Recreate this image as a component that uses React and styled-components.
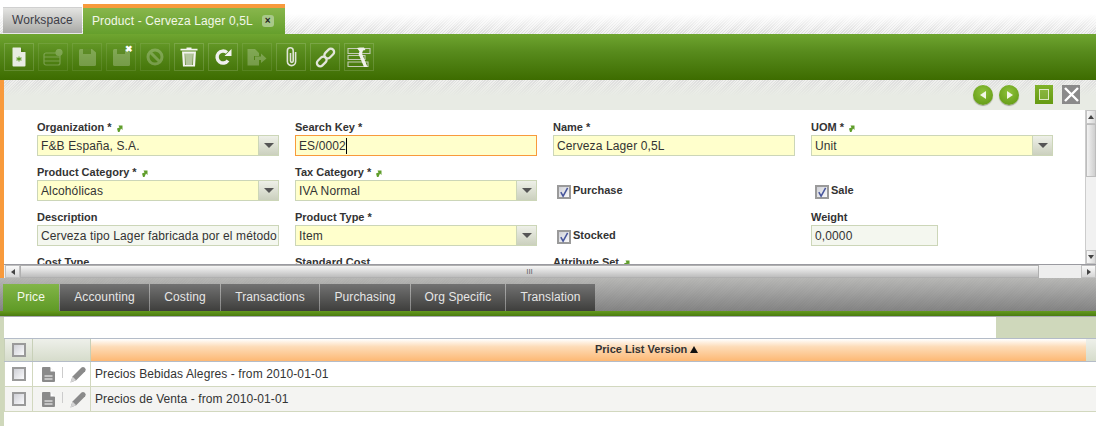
import React from "react";
import styled, { createGlobalStyle, css } from "styled-components";

const GlobalStyle = createGlobalStyle`
  html, body { margin: 0; padding: 0; background: #fff; }
  body { font-family: "Liberation Sans", Arial, sans-serif; color: #333; }
`;

const hatch = (c1, c2) => `repeating-linear-gradient(135deg, ${c1} 0, ${c1} 1px, ${c2} 1px, ${c2} 2px)`;

const Page = styled.div`
  width: 1096px;
  height: 426px;
  overflow: hidden;
  display: flex;
  flex-direction: column;
`;

const TabStrip = styled.div`
  height: 34px;
  display: flex;
  align-items: flex-end;
  padding-left: 3px;
  background: linear-gradient(to bottom, #fff 0, #fff 14px, rgba(255,255,255,0) 32px), ${hatch("#e0e0e0", "#f3f3f3")};
`;

const WorkspaceTab = styled.div`
  width: 79px;
  height: 27px;
  margin-right: 1px;
  box-sizing: border-box;
  padding-left: 9px;
  line-height: 25px;
  font-size: 12px;
  letter-spacing: 0.12px;
  color: #3c3c46;
  background: linear-gradient(to bottom, #e4e4e2, #a9a9a6);
  border-top: 1px solid #d0d0d0;
  border-bottom: 1px solid #e8e8e8;
`;

const ActiveTab = styled.div`
  width: 202px;
  height: 30px;
  box-sizing: border-box;
  border-top: 4px solid #f89a3c;
  padding-left: 9px;
  display: flex;
  align-items: center;
  font-size: 12px;
  letter-spacing: 0.12px;
  color: #f2f7e8;
  background: linear-gradient(to bottom, #88b64c, #659f2c);
`;

const TabClose = styled.span`
  width: 12px;
  height: 12px;
  margin-left: 9px;
  border-radius: 3px;
  background: #a9c98a;
  color: #222;
  font-size: 10px;
  font-weight: bold;
  line-height: 12px;
  text-align: center;
`;

const Toolbar = styled.div`
  height: 46px;
  box-sizing: border-box;
  padding: 9px 4px 0;
  display: flex;
  gap: 4px;
  background: linear-gradient(to bottom, #6fa530 0, #578a1c 40%, #3d6c00 100%);
`;

const ToolButton = styled.div`
  width: 30px;
  height: 28px;
  box-sizing: border-box;
  border: 1px solid ${p => (p.$off ? "rgba(255,255,255,0.09)" : "rgba(255,255,255,0.15)")};
  display: flex;
  align-items: center;
  justify-content: center;
  position: relative;
  svg { display: block; opacity: ${p => (p.$off ? 0.24 : 1)}; }
`;

const ToolBadge = styled.span`
  position: absolute;
  right: 2px;
  top: 1px;
  color: #fff;
  font-size: 9px;
  font-weight: bold;
  line-height: 8px;
`;

const Main = styled.div`
  border-left: 4px solid #f89a3c;
  height: 198px;
  display: flex;
  flex-direction: column;
`;

const ActionBar = styled.div`
  height: 30px;
  flex: none;
  box-sizing: border-box;
  padding: 5px 16px 0 0;
  display: flex;
  justify-content: flex-end;
  align-items: flex-start;
  background: linear-gradient(to bottom, rgba(232,235,228,0) 0, #e8ebe4 16px), ${hatch("#dedede", "#f0f0ee")};
`;

const RoundBtn = styled.span`
  width: 20px;
  height: 20px;
  margin-right: ${p => p.$mr || 6}px;
  border-radius: 50%;
  background: radial-gradient(circle at 50% 35%, #8ec23a, #5c9410);
  box-shadow: 0 1px 1px #9aa08c;
  display: flex;
  align-items: center;
  justify-content: center;
`;

const MaxBtn = styled.span`
  width: 18px;
  height: 19px;
  margin-right: 9px;
  box-sizing: border-box;
  background: linear-gradient(to bottom, #80b22a, #659a12);
  padding: 4px;
  &::after {
    content: "";
    display: block;
    height: 100%;
    border: 1px solid #dfe9c8;
    background: rgba(255,255,255,0.12);
    box-sizing: border-box;
  }
`;

const CloseBtn = styled.span`
  width: 18px;
  height: 19px;
  background: #8a8a8a;
  display: flex;
  align-items: center;
  justify-content: center;
`;

const FormRow = styled.div`
  height: 154px;
  flex: none;
  display: flex;
`;

const FormArea = styled.div`
  flex: 1;
  overflow: hidden;
  padding: 10px 0 0 33px;
`;

const FormGrid = styled.div`
  display: grid;
  grid-template-columns: repeat(4, 242px);
  grid-auto-rows: 45px;
  column-gap: 16px;
`;

const Field = styled.div`
  display: flex;
  flex-direction: column;
`;

const Label = styled.div`
  height: 15px;
  font-size: 11px;
  font-weight: bold;
  line-height: 15px;
  color: #333;
  display: flex;
  align-items: flex-start;
  gap: 4px;
  svg { margin-top: 4px; }
`;

const Input = styled.div`
  width: ${p => p.$w || "242px"};
  height: 21px;
  box-sizing: border-box;
  border: 1px solid ${p => (p.$focus ? "#f89a3c" : "#ccd6b8")};
  background: ${p => (p.$plain ? "#f4f7ef" : "#ffffcc")};
  padding-left: 3px;
  font-size: 12px;
  letter-spacing: 0.12px;
  color: #333;
  display: flex;
  white-space: nowrap;
  overflow: hidden;
  ${p => p.$focus && css`
    span { border-right: 1px solid #000; }
  `}
`;

const InputText = styled.span`
  flex: 0 1 auto;
  height: 16px;
  line-height: 16px;
  margin-top: 2px;
`;

const DropButton = styled.div`
  margin-left: auto;
  width: 19px;
  flex: none;
  border-left: 1px solid #ccd6b8;
  background: linear-gradient(to bottom, #eef0e8, #cbd0be);
  display: flex;
  align-items: center;
  justify-content: center;
  &::after {
    content: "";
    border-left: 5px solid transparent;
    border-right: 5px solid transparent;
    border-top: 5px solid #555;
  }
`;

const CheckField = styled.div`
  padding: 19px 0 0 4px;
  display: flex;
  align-items: flex-start;
  gap: 2px;
  font-size: 11px;
  font-weight: bold;
  color: #333;
  line-height: 13px;
`;

const CheckBox = styled.span`
  width: 14px;
  height: 14px;
  flex: none;
  box-sizing: border-box;
  border: 2px solid #9a9a9a;
  background: linear-gradient(135deg, #cfd0d6, #fafafc);
  display: flex;
  align-items: center;
  justify-content: center;
  ${p => p.$inField && "margin-top: 1px;"}
`;

const VScroll = styled.div`
  width: 10px;
  flex: none;
  border-left: 1px solid #ccc;
  background: #f0f0f0;
  display: flex;
  flex-direction: column;
  overflow: hidden;
`;

const VArrow = styled.div`
  height: 14px;
  flex: none;
  box-sizing: border-box;
  border: 1px solid #c4c4c4;
  background: linear-gradient(to right, #f8f8f8, #d8d8d8);
  &::after {
    content: "";
    display: block;
    margin: 4px auto 0;
    width: 0;
    ${p => p.$down ? "border-top: 4px solid #444;" : "border-bottom: 4px solid #444;"}
    border-left: 3px solid transparent;
    border-right: 3px solid transparent;
  }
`;

const VThumb = styled.div`
  height: 53px;
  flex: none;
  box-sizing: border-box;
  border: 1px solid #bdbdbd;
  background: linear-gradient(to right, #f2f2f2, #cfcfcf);
`;

const VTrack = styled.div`
  flex: 1;
  background: #f1f1f1;
`;

const HScroll = styled.div`
  height: 14px;
  flex: none;
  box-sizing: border-box;
  border-top: 1px solid #9a9aa0;
  padding-left: 1px;
  background: #f0f0f0;
  display: flex;
`;

const HArrow = styled.div`
  width: 15px;
  flex: none;
  box-sizing: border-box;
  border: 1px solid #c0c0c0;
  background: linear-gradient(to bottom, #fafafa, #d6d6d6);
  display: flex;
  align-items: center;
  justify-content: center;
  &::after {
    content: "";
    ${p => p.$right ? "border-left: 4px solid #444;" : "border-right: 4px solid #444;"}
    border-top: 3px solid transparent;
    border-bottom: 3px solid transparent;
  }
`;

const HThumb = styled.div`
  width: 1019px;
  flex: none;
  box-sizing: border-box;
  border: 1px solid #b0b0b0;
  background: linear-gradient(to bottom, #f6f6f6, #bdbdbd);
  display: flex;
  align-items: center;
  justify-content: center;
  font-size: 8px;
  color: #666;
`;

const HTrack = styled.div`
  flex: 1;
  background: #eeeeee;
`;

const DetailTabs = styled.div`
  height: 33px;
  box-sizing: border-box;
  padding: 6px 0 0 3px;
  display: flex;
  gap: 1px;
  background: linear-gradient(to bottom, rgba(186,186,184,0.9), rgba(128,128,128,0.9)), ${hatch("#8a8a8a", "#a8a8a8")};
`;

const DetailTab = styled.div`
  width: ${p => p.$w}px;
  height: 27px;
  text-align: center;
  line-height: 27px;
  font-size: 12px;
  letter-spacing: 0.12px;
  color: ${p => (p.$active ? "#f5f9ec" : "#e6e6e6")};
  background: ${p => (p.$active
    ? "linear-gradient(to bottom, #82b548, #5f9a26)"
    : "linear-gradient(to bottom, #727272, #3e3e3c)")};
`;

const GreenBar = styled.div`
  height: 5px;
  background: linear-gradient(to bottom, #659a1e, #4a7c10);
  border-bottom: 1px solid #a8a8b0;
`;

const Detail = styled.div`
  flex: 1;
  border-left: 4px solid #cfd8bb;
`;

const StatusRow = styled.div`
  height: 21px;
  display: flex;
  justify-content: flex-end;
  background: #fff;
`;

const StatusFill = styled.div`
  width: 100px;
  background: #cfd8bb;
`;

const gridCols = css`
  display: grid;
  grid-template-columns: 29px 58px 995px 10px;
`;

const GridHead = styled.div`
  ${gridCols}
  height: 24px;
  box-sizing: border-box;
  border-top: 1px solid #b4bcc8;
  border-bottom: 1px solid #b4bcc8;
`;

const HeadCheckCell = styled.div`
  border-left: 1px solid #c8d0b8;
  border-right: 1px solid #c8d0b8;
  background: linear-gradient(to bottom, #eef0ea, #d6dccb);
  display: flex;
  align-items: center;
  justify-content: center;
`;

const HeadIconCell = styled.div`
  border-right: 1px solid #c8d0b8;
  background: linear-gradient(to bottom, #eef0ea, #d6dccb);
`;

const HeadTitle = styled.div`
  background: linear-gradient(to bottom, #fff 0, #fddcb8 35%, #fdb874 100%);
  padding-left: 504px;
  font-size: 11px;
  font-weight: bold;
  line-height: 21px;
  color: #333;
`;

const SortMark = styled.span`
  display: inline-block;
  margin-left: 3px;
  width: 0;
  border-left: 4px solid transparent;
  border-right: 4px solid transparent;
  border-bottom: 7px solid #111;
`;

const HeadEnd = styled.div`
  background: linear-gradient(to bottom, #eef0ea, #d6dccb);
`;

const GridRow = styled.div`
  ${gridCols}
  height: 25px;
  box-sizing: border-box;
  border-bottom: 1px solid #d2d8bf;
  background: ${p => (p.$alt ? "#f4f4f2" : "#fff")};
`;

const RowCheckCell = styled.div`
  border-left: 1px solid #d2d8bf;
  border-right: 1px solid #d2d8bf;
  display: flex;
  align-items: center;
  justify-content: center;
`;

const RowIconCell = styled.div`
  border-right: 1px solid #d2d8bf;
  display: flex;
  align-items: center;
  padding-left: 9px;
`;

const IconDivider = styled.span`
  width: 1px;
  height: 11px;
  margin: -4px 7px 0 7px;
  background: #ccc;
`;

const RowText = styled.div`
  grid-column: span 2;
  padding-left: 4px;
  font-size: 12px;
  letter-spacing: 0.1px;
  line-height: 24px;
  color: #333;
`;

const Arrow = () => (
  <svg width="7" height="8" viewBox="0 0 7 8">
    <path d="M2 8L1 4.5L3.5 3.5L2.5 1.5H6.5V6L5 4.5L3.5 8Z" fill="#5f9d2a" />
  </svg>
);

const NewIcon = () => (
  <svg width="14" height="20" viewBox="0 0 14 20">
    <path d="M1 0.5H8.5L13.5 5.5V18.5Q13.5 19.5 12.5 19.5H1.5Q0.5 19.5 0.5 18.5V1.5Q0.5 0.5 1 0.5Z" fill="#e8ece2" />
    <path d="M9 0.5L13.5 5H9Z" fill="#4d7d14" />
    <path d="M7 9.5V14.5M4.5 10.7L9.5 13.3M9.5 10.7L4.5 13.3" stroke="#5d9a24" strokeWidth="1.1" />
  </svg>
);

const FormIcon = () => (
  <svg width="20" height="17" viewBox="0 0 20 17" fill="none" stroke="#fff" strokeWidth="1.2">
    <rect x="1" y="4" width="16" height="12" rx="2" />
    <path d="M1 8H17M1 12H17" />
    <circle cx="16" cy="3.5" r="3" fill="#fff" />
  </svg>
);

const SaveIcon = () => (
  <svg width="17" height="17" viewBox="0 0 17 17">
    <path d="M1.5 0H13L17 3.5V15.5Q17 17 15.5 17H1.5Q0 17 0 15.5V1.5Q0 0 1.5 0Z" fill="#fff" />
    <rect x="4" y="0" width="8" height="5" fill="#6f8f48" />
  </svg>
);

const StopIcon = () => (
  <svg width="18" height="18" viewBox="0 0 18 18" fill="none" stroke="#fff" strokeWidth="3">
    <circle cx="9" cy="9" r="7" />
    <path d="M4 4L14 14" />
  </svg>
);

const TrashIcon = () => (
  <svg width="18" height="20" viewBox="0 0 18 20">
    <path d="M6.5 0.5H11.5V1.8H17.5V3.4H0.5V1.8H6.5Z" fill="#f4f4f0" />
    <path d="M2 4.5H16L15 19.5H3Z" fill="#f4f4f0" />
    <path d="M5 6.5L5.5 18M9 6.5V18M13 6.5L12.5 18M7 6.5V18M11 6.5V18" stroke="#6a8f3a" strokeWidth="0.9" />
  </svg>
);

const RefreshIcon = () => (
  <svg width="18" height="18" viewBox="0 0 18 18">
    <path d="M14 12.5A6 6 0 1 1 13 4.5" fill="none" stroke="#f0f0ee" strokeWidth="3.4" />
    <path d="M10.5 8H17.5V1Z" fill="#f4f4f2" />
  </svg>
);

const ExportIcon = () => (
  <svg width="20" height="17" viewBox="0 0 20 17">
    <path d="M0.5 0H8L12 4V7H7V11H12V16.5H0.5Z" fill="#fff" />
    <path d="M8 7.5H14V4.5L19.5 9.5L14 14V11H8Z" fill="#fff" />
  </svg>
);

const ClipIcon = () => (
  <svg width="13" height="20" viewBox="0 0 13 20" fill="none" stroke="#e0e4d8" strokeWidth="1.6">
    <path d="M5.5 6V14A1.3 1.3 0 0 0 8.2 14V3.7A2.9 2.9 0 0 0 2.4 3.7V14.5A4 4 0 0 0 10.6 14.5V5" />
  </svg>
);

const LinkIcon = () => (
  <svg width="21" height="21" viewBox="0 0 21 21" fill="none" stroke="#e2e5da" strokeWidth="2.3">
    <rect x="11" y="1" width="6.5" height="11" rx="3.2" transform="rotate(45 14.2 6.5)" />
    <rect x="3.5" y="9" width="6.5" height="11" rx="3.2" transform="rotate(45 6.8 14.5)" />
  </svg>
);

const FieldsIcon = () => (
  <svg width="24" height="21" viewBox="0 0 24 21">
    <path d="M1 1.5H23V6.5H1ZM1 8.5H18V12.5H1ZM1 15H21V19.5H1Z" fill="none" stroke="#c4ccb6" strokeWidth="1.1" />
    <path d="M10 1L12.5 4.5L11.5 7L17 20H20.5L15 6.5L16 3.5L18.5 3L17 0.5L13 0.5L10 1Z" fill="#f0f0ec" />
  </svg>
);

const DocIcon = () => (
  <svg width="13" height="15" viewBox="0 0 13 15">
    <path d="M0 1Q0 0 1 0H8L13 5V14Q13 15 12 15H1Q0 15 0 14Z" fill="#8a8a8a" />
    <path d="M8.5 0L13 4.5H8.5Z" fill="#fff" />
    <path d="M2.5 9H10.5M2.5 12H10.5" stroke="#fff" strokeWidth="1" />
  </svg>
);

const PencilIcon = () => (
  <svg width="17" height="17" viewBox="0 0 17 17">
    <path d="M0.5 16.5L2.5 10.5L11.5 1.5Q13 0.2 14.8 1.7Q16.6 3.4 15.2 5.2L6.2 14.2Z" fill="#8a8a8a" />
    <path d="M0.5 16.5L2.5 10.5L6.2 14.2Z" fill="#d4d4d4" />
  </svg>
);

const Tick = () => (
  <svg width="11" height="11" viewBox="0 0 11 11">
    <path d="M2 5L4.5 9.5L9.5 0.5" fill="none" stroke="#47569c" strokeWidth="1.7" />
  </svg>
);

const Tri = ({ left }) => (
  <svg width="9" height="10" viewBox="0 0 9 10">
    <path d={left ? "M7 1V9L1 5Z" : "M2 1V9L8 5Z"} fill="#f2f6e6" />
  </svg>
);

const X = () => (
  <svg width="15" height="15" viewBox="0 0 15 15">
    <path d="M1 1L14 14M14 1L1 14" stroke="#fff" strokeWidth="2.4" />
  </svg>
);

const tools = [
  { icon: <NewIcon /> },
  { icon: <FormIcon />, off: true },
  { icon: <SaveIcon />, off: true },
  { icon: <SaveIcon />, off: true, badge: true },
  { icon: <StopIcon />, off: true },
  { icon: <TrashIcon /> },
  { icon: <RefreshIcon /> },
  { icon: <ExportIcon />, off: true },
  { icon: <ClipIcon /> },
  { icon: <LinkIcon /> },
  { icon: <FieldsIcon /> },
];

const detailTabs = [
  ["Price", 56],
  ["Accounting", 89],
  ["Costing", 70],
  ["Transactions", 98],
  ["Purchasing", 90],
  ["Org Specific", 94],
  ["Translation", 89],
];

const rows = [
  "Precios Bebidas Alegres - from 2010-01-01",
  "Precios de Venta - from 2010-01-01",
];

const TextField = ({ label, link, value, select, focus, plain, width }) => (
  <Field>
    <Label>
      {label}
      {link && <Arrow />}
    </Label>
    <Input $focus={focus} $plain={plain} $w={width}>
      <InputText>{value}</InputText>
      {select && <DropButton />}
    </Input>
  </Field>
);

const CheckItem = ({ label }) => (
  <CheckField>
    <CheckBox $inField><Tick /></CheckBox>
    {label}
  </CheckField>
);

export default function App() {
  return (
    <Page>
      <GlobalStyle />
      <TabStrip>
        <WorkspaceTab>Workspace</WorkspaceTab>
        <ActiveTab>
          Product - Cerveza Lager 0,5L
          <TabClose>×</TabClose>
        </ActiveTab>
      </TabStrip>
      <Toolbar>
        {tools.map((t, i) => (
          <ToolButton key={i} $off={t.off}>
            {t.icon}
            {t.badge && <ToolBadge>✖</ToolBadge>}
          </ToolButton>
        ))}
      </Toolbar>
      <Main>
        <ActionBar>
          <RoundBtn><Tri left /></RoundBtn>
          <RoundBtn $mr={16}><Tri /></RoundBtn>
          <MaxBtn />
          <CloseBtn><X /></CloseBtn>
        </ActionBar>
        <FormRow>
          <FormArea>
            <FormGrid>
              <TextField label="Organization *" link value="F&B España, S.A." select />
              <TextField label="Search Key *" value="ES/0002" focus />
              <TextField label="Name *" value="Cerveza Lager 0,5L" />
              <TextField label="UOM *" link value="Unit" select />
              <TextField label="Product Category *" link value="Alcohólicas" select />
              <TextField label="Tax Category *" link value="IVA Normal" select />
              <CheckItem label="Purchase" />
              <CheckItem label="Sale" />
              <TextField label="Description" value="Cerveza tipo Lager fabricada por el método" plain />
              <TextField label="Product Type *" value="Item" select />
              <CheckItem label="Stocked" />
              <TextField label="Weight" value="0,0000" plain width="127px" />
              <Field><Label>Cost Type</Label></Field>
              <Field><Label>Standard Cost</Label></Field>
              <Field><Label>Attribute Set <Arrow /></Label></Field>
            </FormGrid>
          </FormArea>
          <VScroll>
            <VArrow />
            <VThumb />
            <VTrack />
            <VArrow $down />
          </VScroll>
        </FormRow>
        <HScroll>
          <HArrow />
          <HThumb>III</HThumb>
          <HTrack />
          <HArrow $right />
        </HScroll>
      </Main>
      <DetailTabs>
        {detailTabs.map(([name, w], i) => (
          <DetailTab key={name} $w={w} $active={i === 0}>{name}</DetailTab>
        ))}
      </DetailTabs>
      <GreenBar />
      <Detail>
        <StatusRow><StatusFill /></StatusRow>
        <GridHead>
          <HeadCheckCell><CheckBox /></HeadCheckCell>
          <HeadIconCell />
          <HeadTitle>Price List Version<SortMark /></HeadTitle>
          <HeadEnd />
        </GridHead>
        {rows.map((text, i) => (
          <GridRow key={text} $alt={i === 1}>
            <RowCheckCell><CheckBox /></RowCheckCell>
            <RowIconCell>
              <DocIcon />
              <IconDivider />
              <PencilIcon />
            </RowIconCell>
            <RowText>{text}</RowText>
          </GridRow>
        ))}
      </Detail>
    </Page>
  );
}
